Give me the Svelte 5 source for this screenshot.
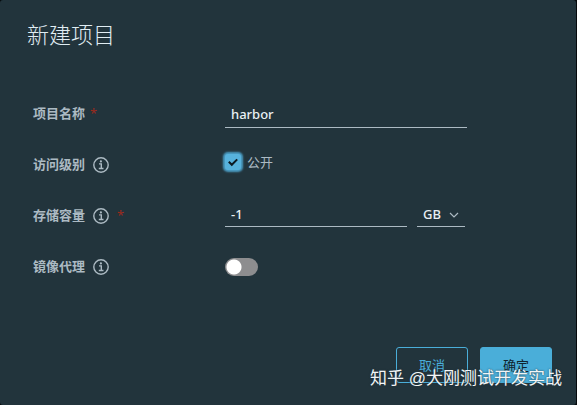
<script>
    let name = 'harbor';
    let isPublic = true;
    let quota = '-1';
    let unit = 'GB';
    let proxy = false;
</script>

{#snippet info()}
    <svg class="info" viewBox="0 0 16 16" aria-hidden="true">
        <circle cx="8" cy="8" r="7.2" />
        <path d="M6 6.9h2.3v4.5M5.8 11.5h4.7" />
        <circle class="dot" cx="7.9" cy="4.4" r="1.1" />
    </svg>
{/snippet}

<form class="dialog" on:submit|preventDefault>
    <h3>新建项目</h3>

    <div class="fields">
        <div class="row">
            <label class="name" for="name">项目名称<span class="required">*</span></label>
            <input class="text wide" id="name" type="text" bind:value={name} />
        </div>
        <div class="row">
            <label class="name" for="public">访问级别{@render info()}</label>
            <div class="control">
                <input class="check" id="public" type="checkbox" bind:checked={isPublic} />
                <svg class="tick" viewBox="0 0 12 12" aria-hidden="true">
                    <path d="M1.8 5.8L4.8 8.8L10.2 3.4" />
                </svg>
                <label class="option" for="public">公开</label>
            </div>
        </div>
        <div class="row">
            <label class="name" for="quota">存储容量{@render info()}<span class="required far">*</span></label>
            <div class="control">
                <input class="text" id="quota" type="text" bind:value={quota} />
                <div class="unit">
                    <select aria-label="GB" bind:value={unit}>
                        <option>MB</option>
                        <option>GB</option>
                        <option>TB</option>
                    </select>
                    <svg class="caret" viewBox="0 0 10 10" aria-hidden="true">
                        <path d="M1 3L5 7L9 3" />
                    </svg>
                </div>
            </div>
        </div>
        <div class="row">
            <label class="name" for="proxy">镜像代理{@render info()}</label>
            <input class="toggle" id="proxy" type="checkbox" role="switch" bind:checked={proxy} />
        </div>
    </div>

    <div class="footer">
        <button class="btn" type="button">取消</button>
        <button class="btn primary" type="submit">确定</button>
    </div>

    <div class="watermark">知乎 @大刚测试开发实战</div>
</form>

<style>
    :global(body) {
        background: #05090c;
    }

    .dialog, input, select, button {
        font-family: "Noto Sans", "Noto Sans CJK SC", sans-serif;
        font-size: 13px;
    }

    .dialog {
        position: relative;
        display: flex;
        flex-direction: column;
        box-sizing: border-box;
        min-height: 100vh;
        margin-right: 1px;
        padding: 18px 24px 22px;
        border-radius: 3px;
        background: #22343c;
        color: #acbac3;
    }

    h3 {
        margin: 0 3px;
        color: #e0edf3;
        font-size: 22px;
        font-weight: 300;
        line-height: 32px;
    }

    .fields {
        margin: 37px 0 auto 9px;
    }

    .row {
        display: grid;
        grid-template-columns: 192px 1fr;
        align-items: center;
        height: 51px;
    }

    .name {
        display: flex;
        align-items: center;
        font-weight: 700;
        line-height: 20px;
    }

    .required {
        margin-left: 5px;
        color: #9c2a1c;
        font-weight: 400;
    }

    .far {
        margin-left: 8px;
    }

    .info {
        width: 16px;
        height: 16px;
        margin: 2px 0 0 8px;
        fill: none;
        stroke: #acbac3;
        stroke-width: 1.4;
    }

    .info .dot {
        fill: #acbac3;
        stroke: none;
    }

    .control {
        display: flex;
        align-items: center;
    }

    .text, select {
        box-sizing: border-box;
        height: 24px;
        border: 0;
        border-bottom: 1px solid #acbac3;
        border-radius: 0;
        outline: 0;
        background: none;
        color: #e9f0f4;
        font-weight: 500;
    }

    .text {
        width: 182px;
        padding: 0 6px;
    }

    .wide {
        width: 242px;
        height: 30px;
        padding-top: 3px;
    }

    .unit {
        display: grid;
        align-items: center;
        width: 48px;
        margin-left: 10px;
    }

    select {
        grid-area: 1 / 1;
        width: 100%;
        padding: 0 6px;
        appearance: none;
    }

    .caret {
        grid-area: 1 / 1;
        justify-self: end;
        width: 10px;
        height: 10px;
        margin-right: 6px;
        fill: none;
        stroke: #acbac3;
        stroke-width: 1.2;
        pointer-events: none;
    }

    .control:has(.check) {
        display: grid;
        grid-template-columns: 16px 1fr;
        column-gap: 6px;
        padding-bottom: 4px;
    }

    .check {
        grid-area: 1 / 1;
        width: 16px;
        height: 16px;
        margin: 0;
        border-radius: 3px;
        background: #57b2dc;
        box-shadow: 0 0 2px 2px #4a9cc3;
        appearance: none;
    }

    .tick {
        grid-area: 1 / 1;
        justify-self: center;
        width: 12px;
        height: 12px;
        fill: none;
        stroke: #0b1a22;
        stroke-width: 2;
        pointer-events: none;
    }

    .check:not(:checked) + .tick {
        visibility: hidden;
    }

    .toggle {
        width: 33px;
        height: 18px;
        margin: 2px 0 0;
        border-radius: 9px;
        background: radial-gradient(circle at 9px 9px, #fff 7px, transparent 8px) #8d8d8f;
        appearance: none;
    }

    .toggle:checked {
        background: radial-gradient(circle at 24px 9px, #fff 7px, transparent 8px) #4aaed9;
    }

    .footer {
        display: flex;
        justify-content: flex-end;
        gap: 12px;
    }

    .btn {
        width: 72px;
        height: 36px;
        padding: 0 0 2px;
        border: 1px solid #4aaed9;
        border-radius: 3px;
        background: none;
        color: #4aaed9;
    }

    .primary {
        background: #4aaed9;
        color: #10242e;
    }

    .watermark {
        position: absolute;
        right: 14px;
        bottom: 14px;
        color: #f2f5f6;
        font-family: "Liberation Sans", "Noto Sans CJK SC", sans-serif;
        font-size: 17px;
        line-height: 24px;
        white-space: pre;
        text-shadow: 0 0 2px #22343c;
        pointer-events: none;
    }
</style>
